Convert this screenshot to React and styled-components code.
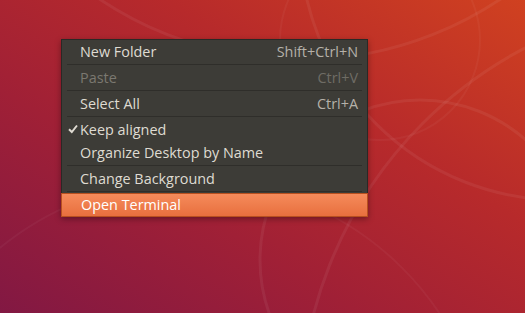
import React from "react";
import styled, { createGlobalStyle } from "styled-components";

const Global = createGlobalStyle`
  html, body { margin: 0; padding: 0; }
  body { width: 525px; height: 313px; overflow: hidden; }
`;

const Desktop = styled.div`
  position: relative;
  width: 525px;
  height: 313px;
  overflow: hidden;
  background: linear-gradient(32deg, #821843 0%, #a02036 35%, #b72a2b 65%, #d04120 100%);
  font-family: "Open Sans", "DejaVu Sans", sans-serif;
`;

const Wallpaper = styled.svg`
  position: absolute;
  inset: 0;
`;

const Menu = styled.div`
  position: absolute;
  left: 61px;
  top: 39px;
  width: 305px;
  background: #3d3c37;
  border: 1px solid #2a2926;
  box-shadow: 0 2px 6px rgba(0, 0, 0, 0.35);
  display: flex;
  flex-direction: column;
`;

const Item = styled.div`
  height: 23px;
  display: flex;
  align-items: center;
  justify-content: space-between;
  padding: 0 9px 1px 18px;
  box-sizing: border-box;
  font-size: 14.4px;
  color: ${(p) => (p.$disabled ? "#7b7870" : "#dfdbd2")};
  position: relative;

  ${(p) =>
    p.$active &&
    `
    height: 24px;
    margin: 0 -1px -1px;
    padding: 0 10px 1px 19px;
    border: 1px solid #b8501f;
    background: linear-gradient(#f58b5b, #e86f3e);
    color: #ffffff;
  `}
`;

const Shortcut = styled.span`
  color: ${(p) => (p.$disabled ? "#6f6c65" : "#b5b1a9")};
`;

const Separator = styled.div`
  height: 1px;
  margin: 1px 5px;
  background: #2f2e2a;
`;

const Check = styled.svg`
  position: absolute;
  left: 6px;
  top: 6px;
`;

const entries = [
  { label: "New Folder", shortcut: "Shift+Ctrl+N" },
  "sep",
  { label: "Paste", shortcut: "Ctrl+V", disabled: true },
  "sep",
  { label: "Select All", shortcut: "Ctrl+A" },
  "sep",
  { label: "Keep aligned", checked: true },
  { label: "Organize Desktop by Name" },
  "sep",
  { label: "Change Background" },
  "sep",
  { label: "Open Terminal", active: true },
];

const App = () => (
  <>
    <Global />
    <Desktop>
      <Wallpaper width="525" height="313" viewBox="0 0 525 313" fill="none">
        <g stroke="#ffffff" strokeOpacity="0.06" strokeWidth="3">
          <circle cx="300" cy="-300" r="360" />
          <circle cx="420" cy="260" r="160" />
          <circle cx="720" cy="420" r="420" />
          <circle cx="560" cy="-60" r="260" />
        </g>
        <g stroke="#ffffff" strokeOpacity="0.04" strokeWidth="2">
          <circle cx="380" cy="40" r="100" />
          <circle cx="190" cy="480" r="300" />
        </g>
      </Wallpaper>
      <Menu>
        {entries.map((e, i) =>
          e === "sep" ? (
            <Separator key={i} />
          ) : (
            <Item key={i} $disabled={e.disabled} $active={e.active}>
              {e.checked && (
                <Check width="10" height="10" viewBox="0 0 10 10">
                  <path d="M1 5.2 L3.8 8 L9 1.5" stroke="#dfdbd2" strokeWidth="2" fill="none" />
                </Check>
              )}
              <span>{e.label}</span>
              {e.shortcut && <Shortcut $disabled={e.disabled}>{e.shortcut}</Shortcut>}
            </Item>
          )
        )}
      </Menu>
    </Desktop>
  </>
);

export default App;
